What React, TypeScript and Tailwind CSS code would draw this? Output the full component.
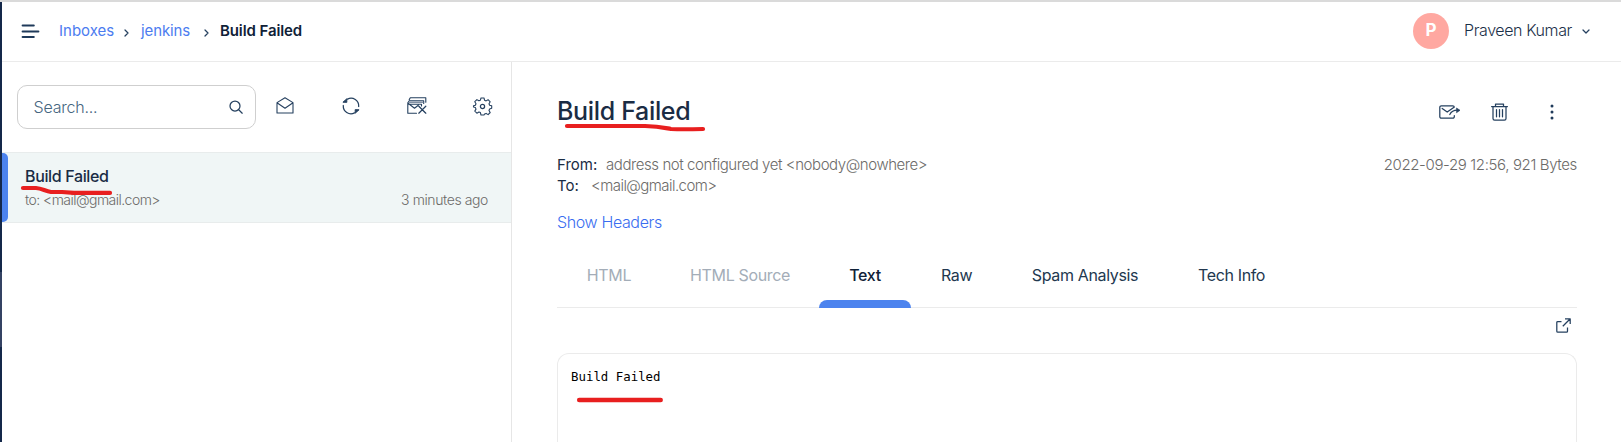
import type { ReactNode } from 'react';

const stroke = { fill: 'none', stroke: '#25405f', strokeWidth: 1.25, strokeLinecap: 'round', strokeLinejoin: 'round' } as const;

function Svg({ w, h, className = '', children }: { w: number; h: number; className?: string; children: ReactNode }) {
  return (
    <svg width={w} height={h} viewBox={`0 0 ${w} ${h}`} className={`block shrink-0 overflow-visible ${className}`} {...stroke}>
      {children}
    </svg>
  );
}

function Header() {
  return (
    <header className="flex h-[60px] items-center border-b border-[#ebebeb] pl-[19px] pr-[30px] text-[15px] text-[#1b2d45]">
      <Svg w={19} h={16} className="-mt-px">
        <path d="M1.600 2.500h11.200M1.600 8.500h15.800M1.600 14h11.200" strokeWidth="2" stroke="#1f3a5a" />
      </Svg>
      <a className="ml-[19px] w-[55px] whitespace-nowrap text-[#4c7cf0]">Inboxes</a>
      <Svg w={5} h={8} className="ml-[10px] mt-[3px]"><path d="M1 1l3 3-3 3" /></Svg>
      <a className="ml-[12px] w-[50px] whitespace-nowrap tracking-[-0.100px] text-[#4c7cf0]">jenkins</a>
      <Svg w={5} h={8} className="ml-[13px] mt-[3px]"><path d="M1 1l3 3-3 3" /></Svg>
      <span className="ml-[11px] font-semibold tracking-[-0.100px] text-[#0f2137]">Build Failed</span>
      <div className="ml-auto flex items-center">
        <div className="-mt-px flex size-9 items-center justify-center rounded-full bg-[#ffa8a1] text-[17px] font-bold text-white">P</div>
        <span className="-mt-[3px] ml-[15px] w-[109px] whitespace-nowrap text-[16px] font-light tracking-[-0.400px] text-[#1b3049]">Praveen Kumar</span>
        <Svg w={8} h={6} className="ml-[9px] mr-px"><path d="M1 1l3 3 3-3" /></Svg>
      </div>
    </header>
  );
}

function Sidebar() {
  return (
    <aside className="relative w-[510px] border-r border-[#e6e6e6]">
      <div className="flex h-[90px] items-center">
        <div className="ml-[15px] flex h-[44px] w-[239px] items-center justify-between rounded-[10px] border border-[#cfcfcf] pl-[15.500px] pr-[12px]">
          <span className="-mt-px text-[16px] font-light tracking-[-0.200px] text-[#466680]">Search...</span>
          <Svg w={14} h={14} className="-mt-px">
            <circle cx="6" cy="6" r="5" />
            <path d="M9.700 9.700l3.500 3.500" />
          </Svg>
        </div>
        <Svg w={18} h={17} className="-mt-[3px] ml-[20px]">
          <path d="M1 5.600L9 .8l8 4.800v10.400H1zM1 5.800l8 5.400 8-5.400" strokeWidth="1.100" />
        </Svg>
        <Svg w={18} h={18} className="-mt-[3px] ml-[48px]">
          <path d="M5.500 2.100A7.700 7.700 0 0 1 16.700 9.500M12.500 15.900A7.700 7.700 0 0 1 1.300 8.500" />
          <path d="M1.200 5L4.800 1.800v3.200zM16.800 13l-3.600 3.200V13z" fill="#25405f" strokeWidth="1" />
        </Svg>
        <Svg w={20} h={17} className="-mt-[3px] ml-[47px]">
          <path d="M9.500 16.200H.8V5.800M.8 6l6.700 5.200 3.800-3M14.500 9V7.200H1.200" strokeWidth="1.100" />
          <path d="M1.200 5.300l1-1.500h14.500v2.700M2.200 2.600L3.300.8h15.500v4.500" strokeWidth="1.100" />
          <path d="M2.500 5.300h13" stroke="#8290a3" strokeWidth="1.500" />
          <path d="M11.800 9.200l7 7M18.800 9.200l-7 7" />
        </Svg>
        <Svg w={19} h={19} className="-mt-[2px] ml-[46px]">
          <circle cx="9.500" cy="9.500" r="2.100" />
          <path d="M8 1h3l.6 2.300 1.500.6 2-1.200 2.100 2.100-1.200 2 .6 1.500 2.100.5v2.500l-2.100.7-.6 1.500 1.200 2-2.100 2.100-2-1.200-1.500.6L11 18H8l-.6-2.400-1.500-.6-2 1.200-2.100-2.100 1.200-2-.6-1.500L.5 10V8.700l1.900-.5.600-1.500-1.200-2 2.100-2.100 2 1.200 1.500-.6z" strokeWidth="1.100" />
        </Svg>
      </div>
      <div className="flex h-[71px] border-y border-[#e8ecec] bg-[#f0f6f6]">
        <div className="w-[6px] rounded-r-[5px] bg-[#4c83ee]" />
        <div className="flex-1 pl-[17px] pr-[23px] pt-[12px]">
          <div className="h-[22px] text-[16px] leading-[22px] font-medium tracking-[-0.360px] text-[#1a2c44]">Build Failed</div>
          <div className="mt-[2px] flex justify-between text-[14px] leading-[22px] font-light text-[#6c6b69]">
            <span className="tracking-[-0.540px]">to: &lt;mail@gmail.com&gt;</span>
            <span className="tracking-[-0.400px]">3 minutes ago</span>
          </div>
        </div>
      </div>
      <Svg w={91} h={10} className="absolute left-[19px] top-[124px]">
        <path d="M2 2h13c6 .5 9 3 15 4h11l12 .9h36" stroke="#e81f1f" strokeWidth="4.200" />
      </Svg>
    </aside>
  );
}

const tabs = [
  { label: 'HTML', cls: 'w-[104px] text-[#a3adb8]' },
  { label: 'HTML Source', cls: 'w-[158px] text-[#a3adb8]' },
  { label: 'Text', cls: 'w-[92px] font-medium text-[#0f2137]', active: true },
  { label: 'Raw', cls: 'w-[91px] text-[#22384f]' },
  { label: 'Spam Analysis', cls: 'w-[166px] text-[#22384f]' },
  { label: 'Tech Info', cls: 'w-[127px] text-[#22384f]' },
];

function Message() {
  return (
    <main className="relative flex flex-1 flex-col pl-[45px] pr-[44px]">
      <div className="flex h-[92px] items-center pt-[8px]">
        <h1 className="mr-auto text-[25px] font-[550] tracking-[-0.330px] text-[#1a2c44]">Build Failed</h1>
        <Svg w={22} h={14} className="mr-[30px]">
          <path d="M15.300 10.500v1.200a1.500 1.500 0 0 1-1.500 1.500H2.300A1.500 1.500 0 0 1 .8 11.700V2.300A1.500 1.500 0 0 1 2.300.8h11.500a1.500 1.500 0 0 1 1.500 1.300M3.200 3.400l5 3.700 6.500-4.500" />
          <path d="M10.800 9.500c1.500-3 3.700-4.300 7.500-4.300" />
          <path d="M17.800 3.200L21 5.300l-3.200 2.200z" fill="#25405f" strokeWidth=".7" />
        </Svg>
        <Svg w={17} h={18} className="mr-[42px]">
          <path d="M.6 3.500h15.800M4.500 3V1h8v2M2 3.700V15.500a1.600 1.600 0 0 0 1.600 1.600h9.800a1.600 1.600 0 0 0 1.600-1.600V3.700M5.500 6.500v7.300M8.500 6.500v7.300M11.500 6.500v7.300" />
        </Svg>
        <Svg w={4} h={16} className="mr-[23px]">
          <g fill="#1f3a5a" stroke="none"><circle cx="2" cy="2" r="1.500" /><circle cx="2" cy="8" r="1.500" /><circle cx="2" cy="14" r="1.500" /></g>
        </Svg>
      </div>
      <div className="flex h-[42px] justify-between text-[15px] leading-[21px] font-light text-[#6c6b69]">
        <div>
          <div className="flex"><span className="w-[49px] font-normal text-[#1a2c44]">From:</span><span className="tracking-[-0.430px]">address not configured yet &lt;nobody@nowhere&gt;</span></div>
          <div className="flex"><span className="w-[34px] font-normal text-[#1a2c44]">To:</span><span className="tracking-[-0.560px]">&lt;mail@gmail.com&gt;</span></div>
        </div>
        <span className="tracking-[-0.370px]">2022-09-29 12:56, 921 Bytes</span>
      </div>
      <a className="mt-[15px] h-[22px] text-[16px] leading-[22px] font-light tracking-[-0.370px] text-[#3a6df0]">Show Headers</a>
      <nav className="mt-[9px] flex h-[66px] border-b border-[#ebebeb] text-[16px]">
        {tabs.map((t) => (
          <div key={t.label} className={`flex flex-col items-center justify-end whitespace-nowrap tracking-[-0.350px] ${t.cls}`}>
            <span className="mb-[13px] leading-[24px]">{t.label}</span>
            <span className={`-mb-px h-2 w-full ${t.active ? 'rounded-t-lg bg-[#4c83ee]' : ''}`} />
          </div>
        ))}
      </nav>
      <div className="flex h-[45px] justify-end pr-[6px] pt-[10px]">
        <Svg w={15} h={15}>
          <path d="M5.500 3.500H1.800a1 1 0 0 0-1 1v8.700a1 1 0 0 0 1 1h8.700a1 1 0 0 0 1-1V9.500M9 .8h5.200V6M14 1L6.800 8.200" strokeLinecap="butt" />
        </Svg>
      </div>
      <div className="-mb-4 flex-1 rounded-t-[12px] border border-b-0 border-[#ebebeb] pl-[13px] pt-[14px]">
        <pre className="font-['DejaVu_Sans_Mono',monospace] text-[12.400px] leading-[18px] text-black">Build Failed</pre>
      </div>
      <Svg w={142} h={10} className="absolute left-[53px] top-[61px]">
        <path d="M2 3h78c14 .3 18 1.500 26 3 10 .5 20 .3 32 0" stroke="#e81f1f" strokeWidth="4.200" />
      </Svg>
      <Svg w={87} h={6} className="absolute left-[65px] top-[335px]">
        <path d="M2.200 3h81.500" stroke="#e81f1f" strokeWidth="4.500" />
      </Svg>
    </main>
  );
}

export default function App() {
  return (
    <div className="h-[442px] w-[1621px] overflow-hidden border-t-2 border-[#dadada] bg-white font-['Inter','Liberation_Sans',sans-serif]">
      <div className="flex h-full">
        <div className="w-[2px] bg-[#14284a] pt-[270px]">
          <div className="h-[75px] bg-[#344263]" />
        </div>
        <div className="flex flex-1 flex-col">
          <Header />
          <div className="flex min-h-0 flex-1">
            <Sidebar />
            <Message />
          </div>
        </div>
      </div>
    </div>
  );
}
